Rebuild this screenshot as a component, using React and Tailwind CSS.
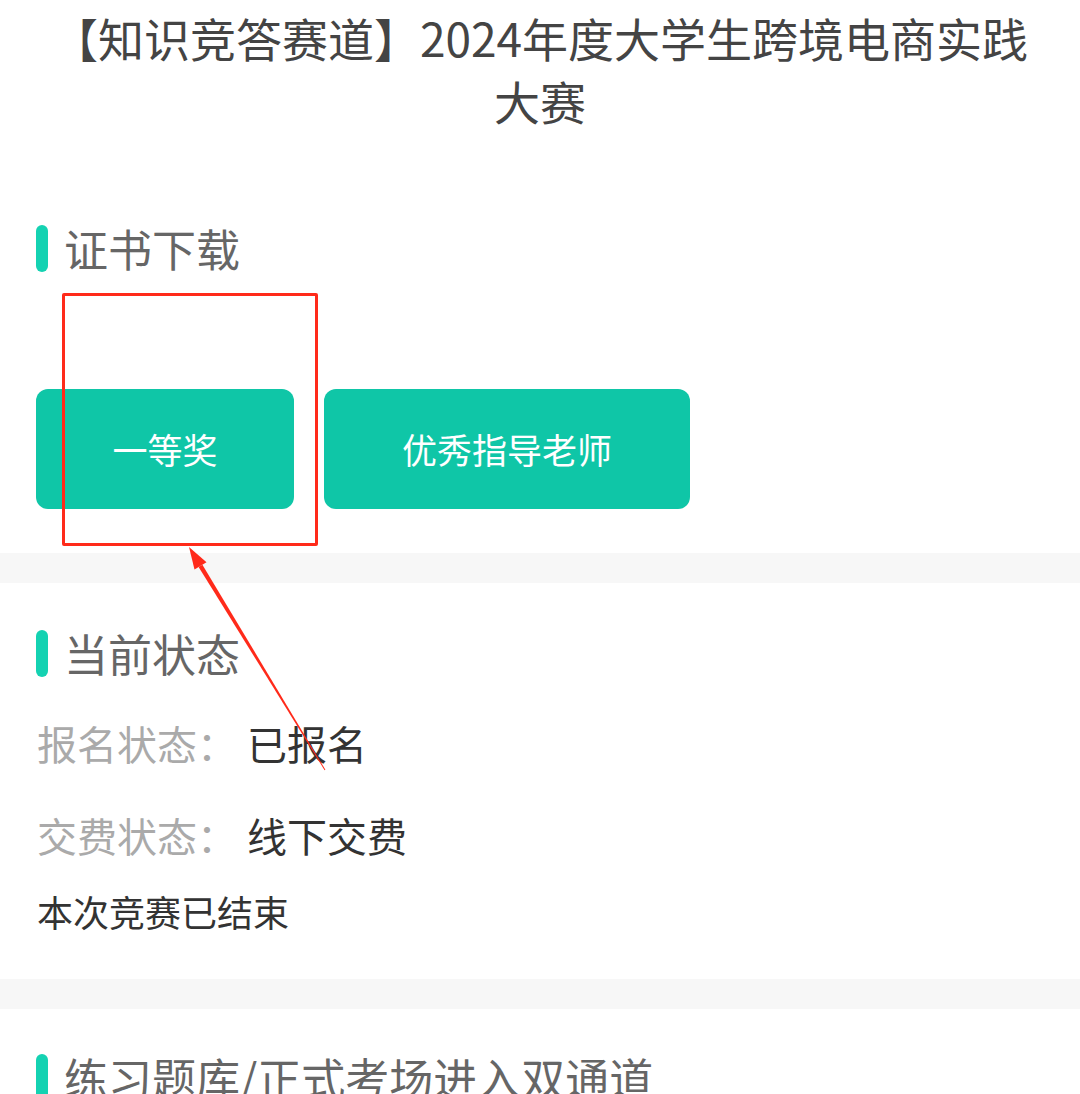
import React from "react";

const font = { fontFamily: '"Noto Sans CJK SC", "Noto Sans", sans-serif' };

const SectionTitle = ({ children }) => (
  <div className="flex items-center h-[66px] px-[36px]">
    <span className="w-[12px] h-[47px] rounded-full bg-[#14d2b2] shrink-0" />
    <span className="ml-[16px] text-[44px] leading-[66px] text-[#666666] whitespace-nowrap">{children}</span>
  </div>
);

const Row = ({ label, value }) => (
  <div className="flex items-center h-[92px] px-[37px] text-[40px]">
    <span className="text-[#aaaaaa]">{label}：</span>
    <span className="ml-[10px] text-[#333333]">{value}</span>
  </div>
);

export default function App() {
  return (
    <div className="relative w-[1080px] h-[1094px] overflow-hidden bg-white" style={font}>
      <h1 className="pt-[6px] text-center text-[46px] leading-[63px] text-[#444444] font-normal px-[40px]">
        【知识竞答赛道】2024年度大学生跨境电商实践大赛
      </h1>

      <div className="mt-[83px]">
        <SectionTitle>证书下载</SectionTitle>
      </div>

      <div className="mt-[108px] flex gap-[30px] px-[36px]">
        <button className="h-[120px] w-[258px] rounded-[12px] bg-[#0fc6a7] text-white text-[35px]">一等奖</button>
        <button className="h-[120px] w-[366px] rounded-[12px] bg-[#0fc6a7] text-white text-[35px]">优秀指导老师</button>
      </div>

      <div className="mt-[44px] h-[30px] bg-[#f7f7f7]" />

      <div className="mt-[37px]">
        <SectionTitle>当前状态</SectionTitle>
      </div>
      <div className="mt-[11px]">
        <Row label="报名状态" value="已报名" />
        <Row label="交费状态" value="线下交费" />
      </div>
      <p className="px-[37px] h-[60px] leading-[60px] text-[36px] text-[#333333]">本次竞赛已结束</p>

      <div className="mt-[38px] h-[30px] bg-[#f7f7f7]" />

      <div className="mt-[35px]">
        <SectionTitle>练习题库/正式考场进入双通道</SectionTitle>
      </div>

      {/* annotation overlay */}
      <div className="absolute left-[62px] top-[293px] w-[256px] h-[253px] border-[3px] border-[#ff2a1a] rounded-[2px]" />
      <svg className="absolute inset-0 pointer-events-none" width="1080" height="1094" viewBox="0 0 1080 1094">
        <polygon points="189,547 194.5,569.4 206.5,562.2" fill="#ff2a1a" />
        <polygon points="198.6,566.9 202.4,564.7 325.4,769.8 324.6,770.2" fill="#ff2a1a" />
      </svg>
    </div>
  );
}
